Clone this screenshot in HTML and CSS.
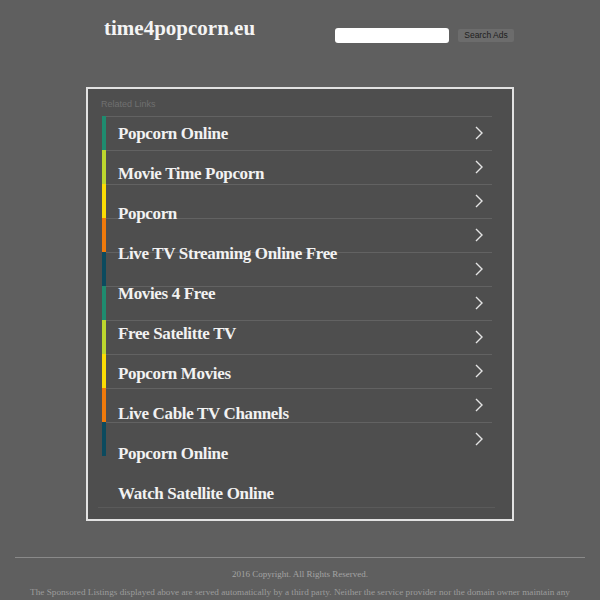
FILE: index.html
```html
<!DOCTYPE html>
<html>
<head>
<meta charset="utf-8">
<title>time4popcorn.eu</title>
<link rel="stylesheet" href="styles.css">
</head>
<body>
<div class="wrap">
  <header class="header">
    <div class="title">time4popcorn.eu</div>
    <form class="search">
      <input class="search-input" type="text">
      <button class="search-btn" type="button">Search Ads</button>
    </form>
  </header>
  <section class="box">
    <div class="label">Related Links</div>
    <div class="stack">
      <div class="layer-bars">
        <div class="bar-row"><span class="bar c1"></span><span class="cell"><svg class="chev" viewBox="0 0 8 14" width="8" height="14"><polyline points="1,1 7,7 1,13"/></svg></span></div>
        <div class="bar-row"><span class="bar c2"></span><span class="cell"><svg class="chev" viewBox="0 0 8 14" width="8" height="14"><polyline points="1,1 7,7 1,13"/></svg></span></div>
        <div class="bar-row"><span class="bar c3"></span><span class="cell"><svg class="chev" viewBox="0 0 8 14" width="8" height="14"><polyline points="1,1 7,7 1,13"/></svg></span></div>
        <div class="bar-row"><span class="bar c4"></span><span class="cell"><svg class="chev" viewBox="0 0 8 14" width="8" height="14"><polyline points="1,1 7,7 1,13"/></svg></span></div>
        <div class="bar-row"><span class="bar c5"></span><span class="cell"><svg class="chev" viewBox="0 0 8 14" width="8" height="14"><polyline points="1,1 7,7 1,13"/></svg></span></div>
        <div class="bar-row"><span class="bar c1"></span><span class="cell"><svg class="chev" viewBox="0 0 8 14" width="8" height="14"><polyline points="1,1 7,7 1,13"/></svg></span></div>
        <div class="bar-row"><span class="bar c2"></span><span class="cell"><svg class="chev" viewBox="0 0 8 14" width="8" height="14"><polyline points="1,1 7,7 1,13"/></svg></span></div>
        <div class="bar-row"><span class="bar c3"></span><span class="cell"><svg class="chev" viewBox="0 0 8 14" width="8" height="14"><polyline points="1,1 7,7 1,13"/></svg></span></div>
        <div class="bar-row"><span class="bar c4"></span><span class="cell"><svg class="chev" viewBox="0 0 8 14" width="8" height="14"><polyline points="1,1 7,7 1,13"/></svg></span></div>
        <div class="bar-row"><span class="bar c5"></span><span class="cell"><svg class="chev" viewBox="0 0 8 14" width="8" height="14"><polyline points="1,1 7,7 1,13"/></svg></span></div>
      </div>
      <ul class="layer-text">
        <li class="link">Popcorn Online</li>
        <li class="link">Movie Time Popcorn</li>
        <li class="link">Popcorn</li>
        <li class="link">Live TV Streaming Online Free</li>
        <li class="link">Movies 4 Free</li>
        <li class="link">Free Satelitte TV</li>
        <li class="link">Popcorn Movies</li>
        <li class="link">Live Cable TV Channels</li>
        <li class="link">Popcorn Online</li>
        <li class="link">Watch Satellite Online</li>
      </ul>
    </div>
  </section>
</div>
<footer class="footer">
  <div class="rule"></div>
  <p class="copy">2016 Copyright. All Rights Reserved.</p>
  <p class="disclaimer">The Sponsored Listings displayed above are served automatically by a third party. Neither the service provider nor the domain owner maintain any relationship with the advertisers. In case of trademark issues please contact the domain owner directly (contact information can be found in whois).</p>
</footer>
</body>
</html>
```
FILE: styles.css
```css
html, body {
  margin: 0;
  padding: 0;
}
body {
  background: #5f5f5f;
  font-family: "Liberation Serif", "Times New Roman", serif;
  overflow: hidden;
}
.wrap {
  width: 428px;
  margin: 0 auto;
}
.header {
  height: 87px;
  box-sizing: border-box;
  padding-top: 16px;
  display: flex;
  justify-content: space-between;
  align-items: flex-start;
}
.title {
  padding-left: 18px;
  font-size: 21px;
  line-height: 24px;
  font-weight: bold;
  color: #f4f4f4;
}
.search {
  margin: 12px 0 0 0;
  display: flex;
  align-items: center;
  gap: 9px;
}
.search-input {
  width: 114px;
  height: 15px;
  box-sizing: border-box;
  border: none;
  border-radius: 3px;
  background: #ffffff;
  padding: 0;
  margin: 0;
}
.search-btn {
  width: 56px;
  height: 13px;
  box-sizing: border-box;
  border: none;
  border-radius: 2px;
  background: #6c6c6c;
  color: #1e1e1e;
  font-family: "Liberation Sans", Arial, sans-serif;
  font-size: 8.5px;
  line-height: 13px;
  padding: 0;
  margin: 0;
}
.box {
  width: 428px;
  height: 434px;
  box-sizing: border-box;
  border: 2px solid #e2e2e2;
  background: #4e4e4e;
  padding: 10px 17px 0 10px;
}
.label {
  padding-left: 3px;
  font-family: "Liberation Sans", Arial, sans-serif;
  font-size: 9px;
  line-height: 11px;
  color: #707070;
  margin-bottom: 6px;
}
.stack {
  display: grid;
}
.layer-bars, .layer-text {
  grid-area: 1 / 1;
}
.layer-bars {
  padding-left: 4px;
  padding-right: 3px;
  align-self: start;
}
.bar-row {
  display: flex;
  height: 34px;
}
.bar {
  width: 4px;
  flex: none;
}
.c1 { background: #1f8b6f; }
.c2 { background: #bcd62e; }
.c3 { background: #fbdc05; }
.c4 { background: #ef7a0c; }
.c5 { background: #0c4a5e; }
.cell {
  flex: 1;
  border-top: 1px solid #626262;
  display: flex;
  align-items: center;
  justify-content: flex-end;
  padding-right: 9px;
  box-sizing: border-box;
}
.chev {
  display: block;
  margin-top: -1px;
}
.chev polyline {
  fill: none;
  stroke: #e4e4e4;
  stroke-width: 1.4;
}
.layer-text {
  list-style: none;
  margin: 0;
  padding: 0 0 0 20px;
  height: 392px;
  box-sizing: border-box;
  border-bottom: 1px solid #5a5a5a;
  align-self: start;
}
.link {
  height: 40px;
  padding-top: 1px;
  box-sizing: border-box;
  line-height: 34px;
  font-size: 17px;
  font-weight: bold;
  color: #f2f2f2;
  letter-spacing: -0.35px;
}
.link:last-child {
  height: 31px;
}
.footer {
  padding-top: 36px;
}
.rule {
  width: 570px;
  margin: 0 auto;
  border-top: 1px solid #8a8a8a;
}
.copy {
  margin: 10px 0 0 0;
  text-align: center;
  font-size: 9px;
  line-height: 12px;
  color: #a4a4a4;
}
.disclaimer {
  margin: 6px 0 0 0;
  padding: 0 26px;
  text-align: center;
  font-size: 9.2px;
  line-height: 12px;
  color: #9c9c9c;
}
```
